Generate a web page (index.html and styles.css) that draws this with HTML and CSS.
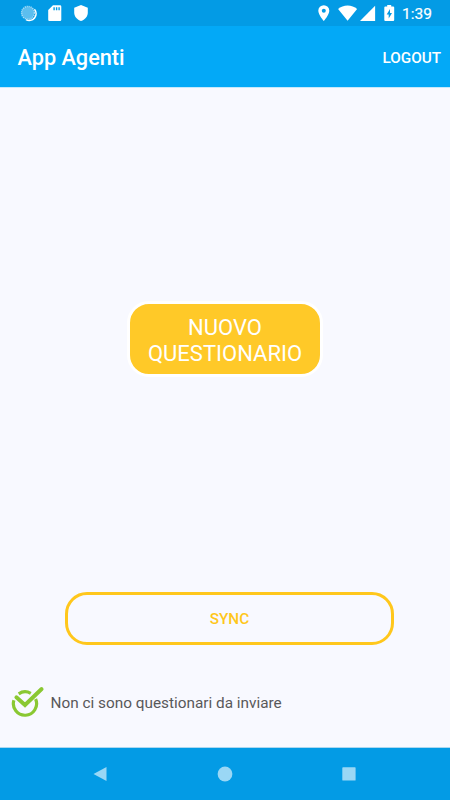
FILE: index.html
```html
<!DOCTYPE html>
<html lang="it">
<head>
    <meta charset="UTF-8">
    <meta name="viewport" content="width=device-width, initial-scale=1.0">
    <title>App Agenti</title>
    <link rel="stylesheet" href="styles.css">
</head>
<body>
    <div class="status-bar">
        <svg class="status-sync" width="17" height="17" viewBox="0 0 17 17">
            <path d="M14.4 4.2A6.800 6.800 0 0 1 6 14.600" fill="none" stroke="#fff" stroke-width="1.600"/>
            <circle cx="8" cy="7.800" r="6.300" fill="#5cbeef"/>
            <circle cx="8" cy="7.800" r="6.400" fill="none" stroke="#a5daf5" stroke-width="1.500" stroke-dasharray="1.200 .8"/>
        </svg>
        <svg class="status-sd" width="14" height="17" viewBox="0 0 14 17">
            <path d="M5 .2h7A1.300 1.300 0 0 1 13.300 1.500v13.200a1.300 1.300 0 0 1-1.300 1.300H1.500A1.300 1.300 0 0 1 .2 14.700V5z" fill="#fff"/>
            <path d="M6.100 2.200v3M8.600 2.200v3M11.100 2.200v3" stroke="#039be5" stroke-width="1.400"/>
        </svg>
        <svg class="status-shield" width="14" height="17" viewBox="0 0 14 17">
            <path d="M7 0l6.800 2.800v4.700c0 4-2.900 7.300-6.800 8.500C3.100 14.800.2 11.500.2 7.500V2.800z" fill="#fff"/>
        </svg>
        <div class="status-right">
            <svg width="12" height="17" viewBox="0 0 12 17">
                <path d="M5.800.2A5.500 5.500 0 0 0 .3 5.700C.3 9.800 5.800 16 5.800 16s5.500-6.200 5.500-10.300A5.500 5.500 0 0 0 5.800.2z" fill="#fff"/>
                <circle cx="5.800" cy="5.700" r="2" fill="#039be5"/>
            </svg>
            <svg class="status-wifi" width="20" height="17" viewBox="0 0 20 17">
                <path d="M9.600 15.800L.1 4.100C2.600 1.900 6 .6 9.600.6s7 1.300 9.500 3.500z" fill="#fff"/>
            </svg>
            <svg class="status-signal" width="16" height="17" viewBox="0 0 16 17">
                <path d="M15.100.8V16H0z" fill="#fff"/>
            </svg>
            <svg class="status-battery" width="11" height="17" viewBox="0 0 11 17">
                <path d="M3.200 0h4v1.600h2A1 1 0 0 1 10.200 2.600V15a1 1 0 0 1-1 1H1.300a1 1 0 0 1-1-1V2.600a1 1 0 0 1 1-1h1.900z" fill="#fff"/>
                <path d="M6 4L2.700 9.600h2v4L8 8h-2z" fill="#039be5"/>
            </svg>
            <span class="clock">1:39</span>
        </div>
    </div>
    <div class="header">
        <h1>App Agenti</h1>
        <button class="logout">LOGOUT</button>
    </div>
    <div class="container">
        <button class="new-button">NUOVO<br>QUESTIONARIO</button>
        <button class="sync-button">SYNC</button>
        <div class="message">
            <svg width="34" height="32" viewBox="0 0 34 32">
                <path d="M7.700 7.800A11.600 11.600 0 0 1 19.800 7.400M2.900 14.200A11.600 11.600 0 1 0 24.600 13" fill="none" stroke="#8ac832" stroke-width="3.200"/>
                <path d="M5.400 11.200L14 19L30.600 3" fill="none" stroke="#8ac832" stroke-width="3.900" stroke-linecap="round"/>
            </svg>
            <span>Non ci sono questionari da inviare</span>
        </div>
    </div>
    <div class="nav-bar">
        <svg width="14" height="16" viewBox="0 0 14 16"><path d="M13.500 1v14L.5 8z" fill="#9ad7f5"/></svg>
        <svg width="16" height="16" viewBox="0 0 16 16"><circle cx="8" cy="8" r="7.400" fill="#9ad7f5"/></svg>
        <svg width="14" height="16" viewBox="0 0 14 16"><rect x=".3" y="1.300" width="13.300" height="13.300" rx=".7" fill="#9ad7f5"/></svg>
    </div>
</body>
</html>
```
FILE: styles.css
```css
* { box-sizing: border-box; }
body { font-family: Roboto, sans-serif; margin: 0; height: 100vh; display: flex; flex-direction: column; background: #f8f9ff; overflow: hidden; }
svg { display: block; flex: none; }
button { font-family: inherit; padding: 0; cursor: pointer; }

.status-bar { height: 26px; flex: none; display: flex; align-items: flex-start; padding: 5px 17px 0 20px; background: #039be5; }
.status-sd { margin-left: 11px; }
.status-shield { margin-left: 12px; }
.status-right { display: flex; margin-left: auto; }
.status-wifi { margin-left: 8px; }
.status-signal { margin-left: 2px; }
.status-battery { margin-left: 8px; }
.clock { width: 31px; margin-left: 7px; color: white; font-size: 15.5px; font-weight: 400; -webkit-text-stroke: 0.2px white; line-height: 18px; white-space: nowrap; }

.header { height: 62px; flex: none; display: flex; align-items: center; justify-content: space-between; padding: 3px 9px 0 17.5px; background: #03a9f7; border-bottom: 1px solid #c5e9fc; }
.header h1 { margin: 0; color: white; font-size: 21.7px; font-weight: 500; line-height: 26px; }
.logout { border: none; background: none; color: white; font-size: 15.3px; font-weight: 500; }

.container { flex: 1; display: flex; flex-direction: column; align-items: center; padding-top: 213px; }
.new-button { width: 196px; height: 76px; padding-top: 3px; border: 3px solid white; border-radius: 22px; background: #ffc928; color: white; font-size: 22px; line-height: 26px; }
.sync-button { width: 329px; height: 53px; margin: 215px 0 0 9px; padding-top: 1px; border: 3px solid #ffc71c; border-radius: 22px; background: none; color: #ffc71c; font-size: 15.3px; font-weight: 500; }
.message { width: 100%; display: flex; align-items: center; gap: 5.5px; margin-top: 41px; padding-left: 11px; color: #58585a; font-size: 15.35px; }
.message span { padding-top: 2px; }

.nav-bar { height: 53px; flex: none; display: flex; align-items: center; justify-content: space-between; padding: 0 94px 0 93px; background: #039be5; border-top: 1px solid #acd8f0; }
```
